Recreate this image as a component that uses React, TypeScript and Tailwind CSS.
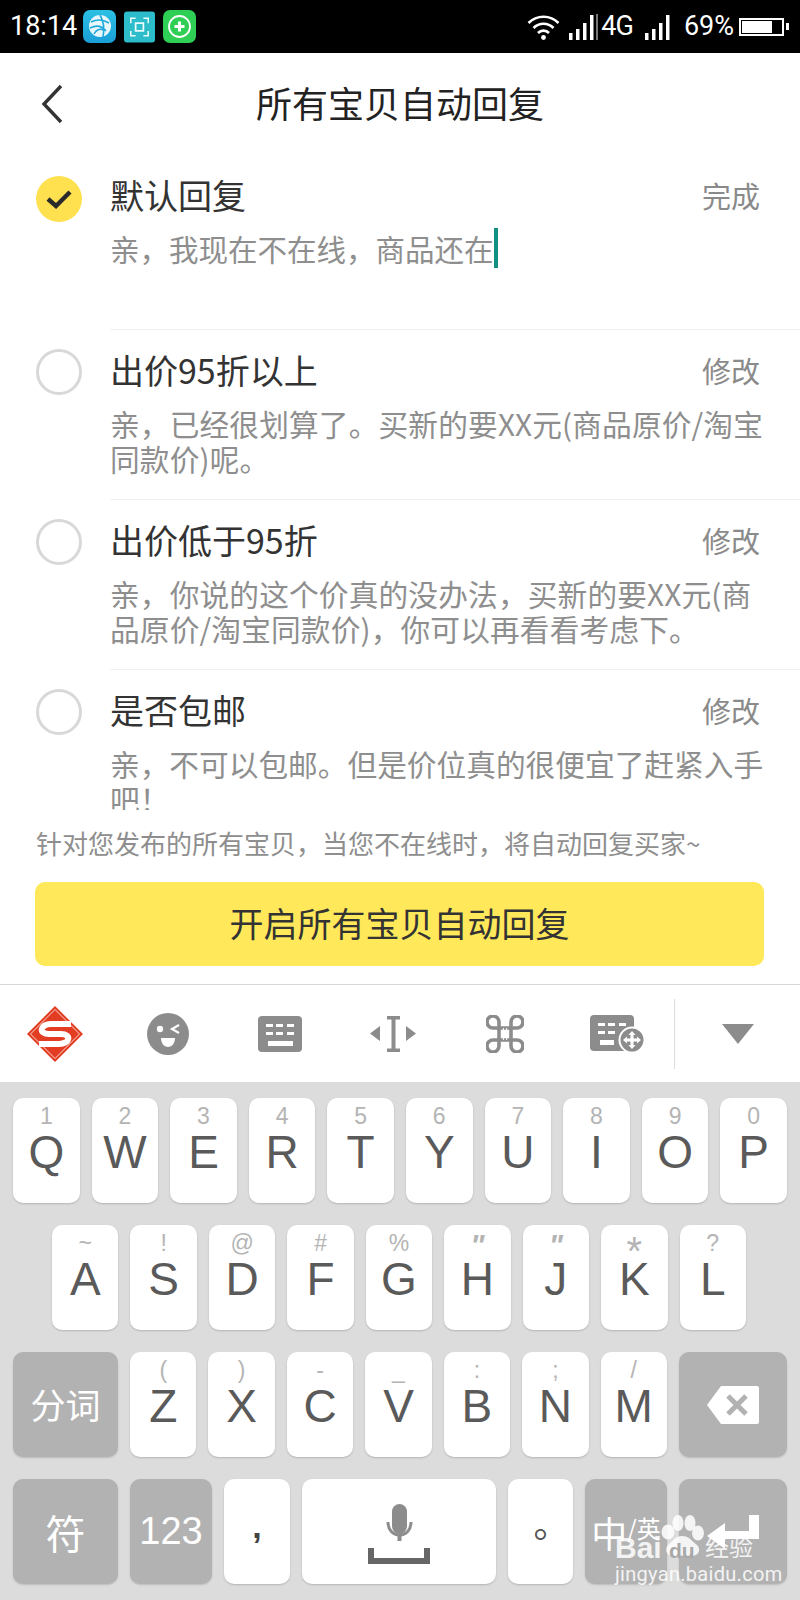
import React from 'react';

const cjk = "font-['Noto_Sans_CJK_SC','Noto_Sans',sans-serif]";
const latin = "font-['Liberation_Sans','Noto_Sans_CJK_SC',sans-serif]";

const rows = [
  { title: '出价95折以上', action: '修改', track: 'tracking-[0.15px]', desc: ['亲，已经很划算了。买新的要XX元(商品原价/淘宝', '同款价)呢。'] },
  { title: '出价低于95折', action: '修改', track: 'tracking-[0.15px]', desc: ['亲，你说的这个价真的没办法，买新的要XX元(商', '品原价/淘宝同款价)，你可以再看看考虑下。'] },
  { title: '是否包邮', action: '修改', track: 'tracking-[0px]', desc: ['亲，不可以包邮。但是价位真的很便宜了赶紧入手', '吧！'] },
];

const row1 = [['Q', '1'], ['W', '2'], ['E', '3'], ['R', '4'], ['T', '5'], ['Y', '6'], ['U', '7'], ['I', '8'], ['O', '9'], ['P', '0']];
const row2 = [['A', '~'], ['S', '!'], ['D', '@'], ['F', '#'], ['G', '%'], ['H', '"'], ['J', '"'], ['K', '*'], ['L', '?']];
const row3 = [['Z', '('], ['X', ')'], ['C', '-'], ['V', '_'], ['B', ':'], ['N', ';'], ['M', '/']];

function Key({ letter, sub }: { letter: string; sub: string }) {
  // the star and the quotes are drawn larger than the other hints on this keyboard
  let subSize = 'text-[23px]';
  if (sub === '*') subSize = 'text-[40px] pt-[8px]';
  if (sub === '"') subSize = 'text-[30px] italic font-bold pt-[2px]';
  return (
    <div className={`flex-1 h-[105px] bg-white rounded-[10px] shadow-[0_1px_2px_rgba(0,0,0,0.18)] flex flex-col items-center pt-[5px] ${latin}`}>
      <span className={`h-[26px] leading-[26px] text-[#b4b4b4] ${subSize}`}>{sub}</span>
      <span className="leading-[46px] text-[46px] text-[#5a5a5a]">{letter}</span>
    </div>
  );
}

function DarkKey({ className, children }: { className: string; children: React.ReactNode }) {
  return (
    <div className={`h-[105px] bg-[#b2b2b2] rounded-[10px] shadow-[0_1px_2px_rgba(0,0,0,0.15)] flex items-center justify-center text-white ${className}`}>
      {children}
    </div>
  );
}

function WhiteKey({ className, children }: { className: string; children: React.ReactNode }) {
  return (
    <div className={`h-[105px] bg-white rounded-[10px] shadow-[0_1px_2px_rgba(0,0,0,0.18)] flex items-center justify-center ${className}`}>
      {children}
    </div>
  );
}

function StatusIcons() {
  return (
    <div className="flex items-center gap-[8px] ml-[6px]">
      <svg width="33" height="33" viewBox="0 0 33 33">
        <defs>
          <linearGradient id="ball" x1="0" y1="0" x2="0" y2="1">
            <stop offset="0" stopColor="#2cc0e4" />
            <stop offset="1" stopColor="#1a9fd6" />
          </linearGradient>
        </defs>
        <rect width="33" height="33" rx="7" fill="url(#ball)" />
        <circle cx="17" cy="16" r="11" fill="#e8f7fb" />
        <path d="M8 12c6-3 13-2 18 1M7 18c6-3 12-2 16 3M11 24c2-4 6-6 9-4M17 5c3 5 5 12 3 22" stroke="#1fa9dc" strokeWidth="1.6" fill="none" />
      </svg>
      <svg width="31" height="32" viewBox="0 0 32 32">
        <rect width="32" height="32" rx="3" fill="#2dbcc9" />
        <path d="M7 12V7h5M20 7h5v5M25 20v5h-5M12 25H7v-5" stroke="#e9fbfc" strokeWidth="1.6" fill="none" />
        <rect x="12" y="12" width="8" height="8" stroke="#e9fbfc" strokeWidth="1.8" fill="none" />
      </svg>
      <svg width="33" height="33" viewBox="0 0 33 33">
        <rect width="33" height="33" rx="7" fill="#2fce55" />
        <circle cx="16.5" cy="16.5" r="10.5" fill="none" stroke="#fff" strokeWidth="1.8" />
        <path d="M6.5 17a10 10 0 0 0 20 0a7 7 0 0 1-20 0z" fill="#fff" />
        <path d="M16.5 11.5v10M11.5 16.5h10" stroke="#fff" strokeWidth="3" />
      </svg>
    </div>
  );
}

function Signal() {
  return (
    <svg width="25" height="26" viewBox="0 0 25 26" fill="#fff">
      <rect x="0" y="19" width="3.5" height="7" />
      <rect x="7" y="15" width="3.5" height="11" />
      <rect x="14" y="9" width="3.5" height="17" />
      <rect x="21" y="1" width="3.5" height="25" />
    </svg>
  );
}

function StatusBar() {
  return (
    <div className="h-[53px] bg-black flex items-center pl-[10px] pr-[11px] text-white font-['Roboto',sans-serif]">
      <span className="text-[27px] leading-none">18:14</span>
      <StatusIcons />
      <div className="flex-1" />
      <svg width="33" height="26" viewBox="0 0 33 26" fill="none" stroke="#fff" strokeWidth="2.6">
        <path d="M1.5 9a21 21 0 0 1 30 0M6.5 14a14 14 0 0 1 20 0M11 19a7.5 7.5 0 0 1 11 0" />
        <circle cx="16.5" cy="23.5" r="2.4" fill="#fff" stroke="none" />
      </svg>
      <div className="ml-[9px] flex items-center">
        <Signal />
        <span className="w-[2px] h-[26px] bg-[#777] ml-[2px]" />
        <span className="text-[27px] leading-none ml-[3px] tracking-[-1px]">4G</span>
      </div>
      <div className="ml-[12px]"><Signal /></div>
      <span className="text-[27px] leading-none ml-[14px]">69%</span>
      <div className="ml-[5px] flex items-center">
        <div className="w-[45px] h-[18px] border-2 border-white p-[1px]">
          <div className="w-[30px] h-full bg-white" />
        </div>
        <div className="w-[3px] h-[7px] ml-[2px] bg-white" />
      </div>
    </div>
  );
}

function Circle({ checked }: { checked?: boolean }) {
  if (checked) {
    return (
      <div className="w-[46px] h-[46px] rounded-full bg-[#ffe04f] flex items-center justify-center shrink-0">
        <svg width="26" height="20" viewBox="0 0 26 20" fill="none" stroke="#2a2a2a" strokeWidth="4.4">
          <path d="M2 10l8 7L24 3" />
        </svg>
      </div>
    );
  }
  return <div className="w-[46px] h-[46px] rounded-full border-[3px] border-[#d8d8d8] shrink-0" />;
}

function ReplyRow({ title, action, desc, checked, caret, track }: { title: string; action: string; desc: string[]; checked?: boolean; caret?: boolean; track?: string }) {
  return (
    <div className={`flex pl-[36px] ${checked ? 'pt-[26px]' : 'pt-[19px]'}`}>
      <Circle checked={checked} />
      <div className={`ml-[28px] flex-1 border-b border-[#f0f0f0] ${checked ? 'h-[154px]' : 'h-[151px]'}`}>
        <div className={`flex items-center justify-between pr-[40px] h-[44px] ${checked ? '-mt-[3px]' : '-mt-[1px]'}`}>
          <span className="text-[34px] leading-[44px] text-[#333]">{title}</span>
          <span className="text-[29px] leading-[44px] text-[#8a8a8a]">{action}</span>
        </div>
        <div className={`text-[#8e8e8e] leading-[35px] whitespace-nowrap ${checked ? 'mt-[12px] text-[29.5px]' : 'mt-[14px] text-[29.7px]'} ${track ?? ''}`}>
          {desc.map((line, i) => (
            <div key={i} className="flex items-center">
              {line}
              {caret && <span className="w-[4px] h-[40px] bg-[#0f9080] -mt-[1px]" />}
            </div>
          ))}
        </div>
      </div>
    </div>
  );
}

function Toolbar() {
  const slot = 'w-[112.5px] flex items-center justify-center shrink-0';
  return (
    <div className="h-[98px] bg-white border-t border-[#d8d8d8] flex items-center">
      <div className={`${slot} -ml-[1px]`}>
        <svg width="58" height="58" viewBox="0 0 58 58">
          <path d="M29 1l28 28-28 28L1 29z" fill="#e23d22" />
          <path d="M29 4.500L53.500 29 29 53.500 4.500 29z" fill="none" stroke="#fff" strokeWidth="0.8" />
          <path d="M45 19H25C14 19 12 29 23 29H35C46 29 44 39 33 39H13" fill="none" stroke="#fff" strokeWidth="6" />
        </svg>
      </div>
      <div className={slot}>
        <svg width="42" height="42" viewBox="0 0 42 42">
          <circle cx="21" cy="21" r="21" fill="#8c8c8c" />
          <circle cx="13" cy="16" r="3.2" fill="#fff" />
          <path d="M32 12l-7 4 7 4" stroke="#fff" strokeWidth="2.2" fill="none" />
          <path d="M14 25h14c0 5-3 9-7 9s-7-4-7-9z" fill="#fff" />
        </svg>
      </div>
      <div className={slot}>
        <svg width="44" height="36" viewBox="0 0 44 36">
          <rect width="44" height="36" rx="4" fill="#8c8c8c" />
          <path d="M8 8h7v3H8zM18 8h7v3h-7zM29 8h7v3h-7zM8 16h7v3H8zM18 16h7v3h-7zM29 16h7v3h-7zM10 25h25v5H10z" fill="#fff" />
        </svg>
      </div>
      <div className={slot}>
        <svg width="46" height="36" viewBox="0 0 46 36" fill="#8c8c8c">
          <path d="M10 10v15L0 17.5zM36 10v15l10-7.5z" />
          <path d="M17 0h13v3.500h-4.500v29H30V36H17v-3.500h4.500v-29H17z" />
        </svg>
      </div>
      <div className={slot}>
        <svg width="38" height="38" viewBox="2.500 2.500 19 19" fill="none" stroke="#8c8c8c" strokeWidth="1.8">
          <path d="M15 6v12a3 3 0 1 0 3-3H6a3 3 0 1 0 3 3V6a3 3 0 1 0-3 3h12a3 3 0 1 0-3-3" />
          <path d="M11.200 9v6M12.800 9v6" stroke="#fff" strokeWidth="0.5" />
        </svg>
      </div>
      <div className={slot}>
        <svg width="55" height="38" viewBox="0 0 55 38">
          <rect width="44" height="36" rx="4" fill="#8c8c8c" />
          <path d="M8 8h7v3H8zM18 8h7v3h-7zM29 8h7v3h-7zM8 16h7v3H8zM18 16h7v3h-7zM10 25h14v5H10z" fill="#fff" />
          <circle cx="42" cy="25" r="12.500" fill="#8c8c8c" stroke="#fff" strokeWidth="2" />
          <path d="M42 16l3.500 4h-2v3.500h3.500v-2l4 3.500-4 3.500v-2h-3.500v3.500h2L42 34l-3.500-4h2v-3.500H37v2L33 25l4-3.500v2h3.500V20h-2z" fill="#fff" />
        </svg>
      </div>
      <div className="w-px h-[70px] bg-[#dddddd]" />
      <div className="flex-1 flex items-center justify-center">
        <svg width="32" height="20" viewBox="0 0 32 20"><path d="M0 0h32L16 20z" fill="#8c8c8c" /></svg>
      </div>
    </div>
  );
}

function Keyboard() {
  return (
    <div className="flex-1 bg-[#dcdcdc] px-[13px] pt-[16px] flex flex-col gap-[22px]">
      <div className="flex gap-[12px]">
        {row1.map(([l, s]) => <Key key={l} letter={l} sub={s} />)}
      </div>
      <div className="flex gap-[12px] ml-[39px] mr-[41px]">
        {row2.map(([l, s]) => <Key key={l} letter={l} sub={s} />)}
      </div>
      <div className="flex gap-[12px]">
        <DarkKey className={`w-[105px] text-[35px] ${cjk}`}>分词</DarkKey>
        {row3.map(([l, s]) => <Key key={l} letter={l} sub={s} />)}
        <DarkKey className="w-[108px]">
          <svg width="54" height="40" viewBox="0 0 54 40">
            <path d="M15 1h36a2 2 0 0 1 2 2v34a2 2 0 0 1-2 2H15L1 20z" fill="#fff" />
            <path d="M22 11l18 18M40 11L22 29" stroke="#b2b2b2" strokeWidth="5" />
          </svg>
        </DarkKey>
      </div>
      <div className="flex gap-[12px]">
        <DarkKey className={`w-[105px] text-[40px] ${cjk}`}>符</DarkKey>
        <DarkKey className={`w-[82px] text-[38px] ${latin}`}>123</DarkKey>
        <WhiteKey className={`w-[66px] text-[34px] text-[#444] ${latin}`}>
          <span className="-mt-[10px] font-bold">,</span>
        </WhiteKey>
        <WhiteKey className="flex-1">
          <svg width="62" height="61" viewBox="0 0 62 61" className="mt-[6px]">
            <rect x="24" y="0" width="15" height="30" rx="7.500" fill="#8c8c8c" />
            <path d="M20 18c0 8 5 13 11.500 13S43 26 43 18" stroke="#8c8c8c" strokeWidth="3" fill="none" />
            <rect x="29.500" y="30" width="4" height="7" fill="#8c8c8c" />
            <path d="M0 44h6v10h50V44h6v16H0z" fill="#666" />
          </svg>
        </WhiteKey>
        <WhiteKey className={`w-[65px] text-[36px] text-[#555] ${cjk}`}>
          <span className="translate-x-[11px] -translate-y-[10px]">。</span>
        </WhiteKey>
        <DarkKey className={`w-[82px] ${cjk}`}>
          <span className="text-[36px] leading-none">中</span>
          <span className="text-[24px] leading-none -mt-[8px]">/英</span>
        </DarkKey>
        <DarkKey className="w-[108px]">
          <svg width="52" height="34" viewBox="0 0 52 34">
            <path d="M42 0h10v24H18v10L0 21 18 8v8h24z" fill="#fff" />
          </svg>
        </DarkKey>
      </div>
    </div>
  );
}

// baidu watermark sits over the bottom right keys
function Watermark() {
  return (
    <div className="absolute left-[614px] top-[1512px] w-[146px] h-[72px] text-white/85">
      <span className={`absolute left-[1px] top-[21px] text-[30px] leading-[30px] font-bold ${latin}`}>Bai</span>
      <svg className="absolute left-[46px] top-[2px]" width="44" height="46" viewBox="0 0 44 46" fill="#fff" fillOpacity="0.85">
        <ellipse cx="8" cy="18" rx="6.500" ry="7.500" />
        <ellipse cx="18" cy="9" rx="5.500" ry="8" />
        <ellipse cx="30" cy="9" rx="5.500" ry="8" />
        <ellipse cx="38" cy="19" rx="6" ry="7.500" />
        <path d="M22 22c7 0 10 5 15 9 5 5 1 12-7 11-5 0-10-1-15 0-8 1-11-6-7-11 5-4 7-9 14-9z" />
      </svg>
      <span className={`absolute left-[55px] top-[28px] text-[21px] leading-[21px] font-bold text-[#a8a8a8] ${latin}`}>du</span>
      <span className={`absolute left-[91px] top-[20px] text-[24px] leading-[28px] ${cjk}`}>经验</span>
      <span className="absolute left-[1px] top-[51px] text-[20px] leading-[22px] tracking-[0.3px] whitespace-nowrap font-['Roboto',sans-serif]">jingyan.baidu.com</span>
    </div>
  );
}

export default function App() {
  return (
    <div className={`relative w-[800px] h-[1600px] overflow-hidden bg-white flex flex-col ${cjk}`}>
      <StatusBar />
      <div className="h-[97px] shrink-0 flex items-center justify-center relative">
        <svg className="absolute left-[40px] top-[31px]" width="24" height="40" viewBox="0 0 24 40" fill="none" stroke="#333" strokeWidth="3.4">
          <path d="M21 2L4 20l17 18" />
        </svg>
        <span className="text-[36px] leading-none text-[#222] mt-[1px]">所有宝贝自动回复</span>
      </div>

      <div className="h-[660px] shrink-0 overflow-hidden">
        <ReplyRow checked caret title="默认回复" action="完成" desc={['亲，我现在不在线，商品还在']} />
        {rows.map(r => <ReplyRow key={r.title} {...r} />)}
      </div>

      <div className="h-[62px] shrink-0 pl-[36px] pt-[2px] flex items-center text-[26px] text-[#8e8e8e]">
        针对您发布的所有宝贝，当您不在线时，将自动回复买家~
      </div>
      <div className="pl-[35px] pr-[36px] shrink-0 mt-[10px]">
        <div className="h-[84px] rounded-[10px] bg-[#ffe85a] flex items-center justify-center text-[34px] text-[#333]">
          <span className="-mt-[4px]">开启所有宝贝自动回复</span>
        </div>
      </div>
      <div className="h-[18px] shrink-0" />
      <Toolbar />
      <Keyboard />
      <Watermark />
    </div>
  );
}
